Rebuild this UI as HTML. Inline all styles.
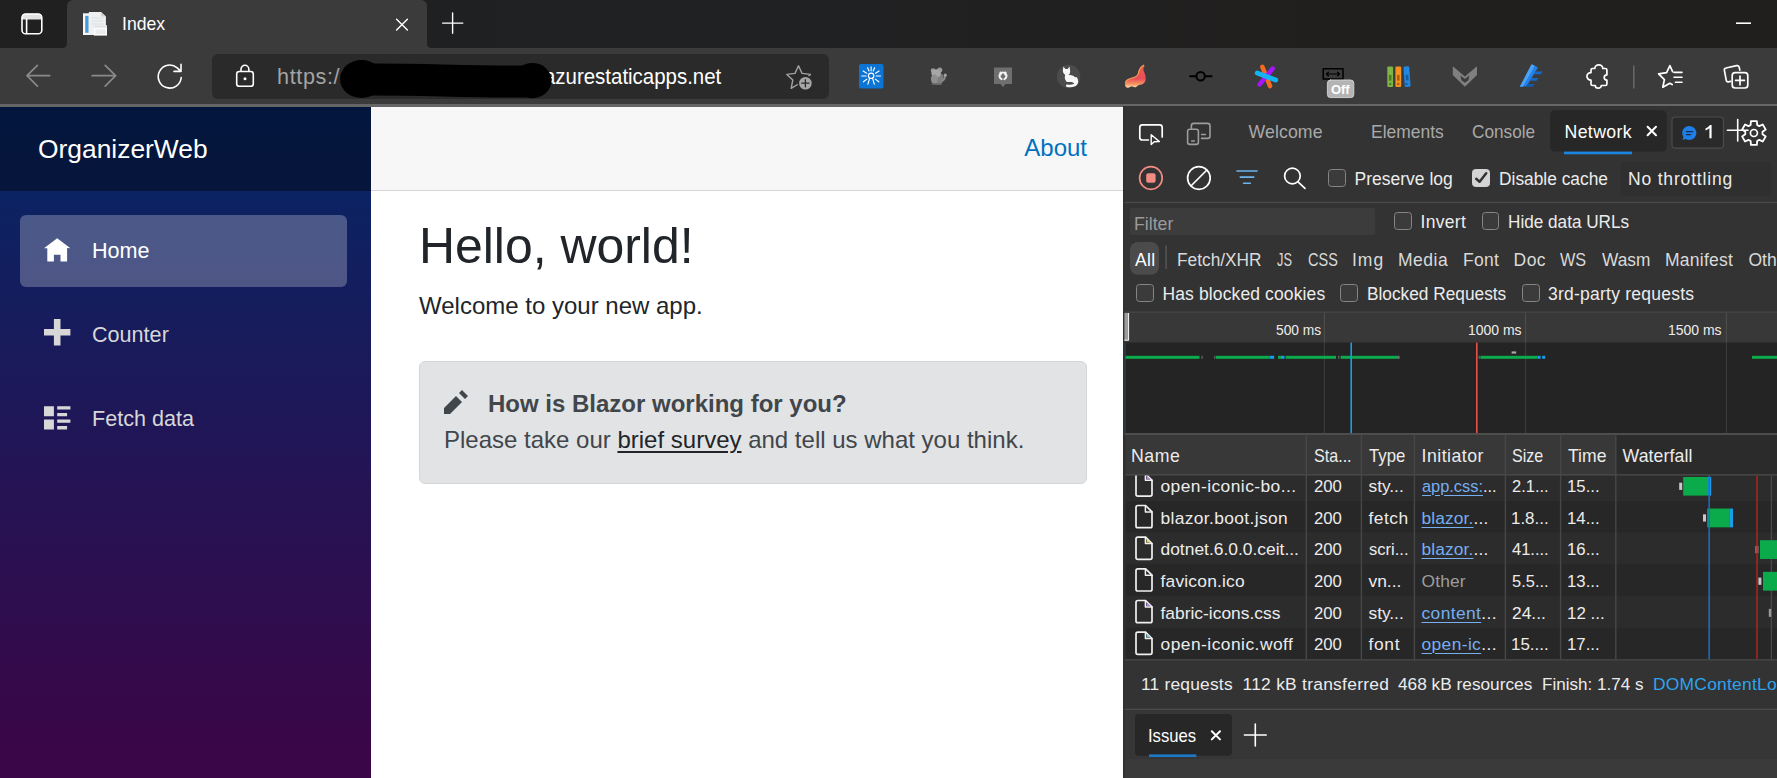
<!DOCTYPE html>
<html>
<head>
<meta charset="utf-8">
<title>Index</title>
<style>
*{box-sizing:border-box;margin:0;padding:0}
html,body{width:1777px;height:778px;overflow:hidden;background:#fff;font-family:"Liberation Sans",sans-serif;}
.abs{position:absolute}
#root{position:relative;width:1777px;height:778px;overflow:hidden}
.t{position:absolute;white-space:nowrap;line-height:1;font-family:"Liberation Sans",sans-serif}
svg{position:absolute;overflow:visible}
/* ---------- browser chrome ---------- */
#tabstrip{left:0;top:0;width:1777px;height:48px;background:linear-gradient(90deg,#202020 0%,#1f2022 25%,#202123 40%,#211f1e 75%,#211f1d 100%)}
#tab{left:67px;top:0;width:360px;height:48px;background:#3b3b3b;border-radius:6px 6px 0 0}
#toolbar{left:0;top:48px;width:1777px;height:57px;background:#3b3b3b}
#tbline{left:0;top:104.4px;width:1777px;height:2.4px;background:#666666}
#urlbar{left:212px;top:54px;width:617px;height:45px;background:#2a2a2a;border-radius:6px}
/* ---------- app ---------- */
#sidebar{left:0;top:106.7px;width:371px;height:672px;background:linear-gradient(180deg,rgb(5,39,103) 0px,#3a0647 640px)}
#brandrow{left:0;top:0;width:371px;height:84px;background:rgba(0,0,0,0.4)}
#brand{left:38px;top:27px;font-size:26.4px;line-height:30px;color:#fff;white-space:nowrap}
.navitem{left:20px;width:327px;height:72px;border-radius:6px}
.navitem.active{background:rgba(255,255,255,0.25)}
.navitem span{position:absolute;left:72px;top:0;line-height:72px;font-size:21.6px;color:#d7d7d7;white-space:nowrap}
.navitem.active span{color:#fff}
.navitem svg{position:absolute;left:24px;top:19.8px;width:26.4px;height:26.4px;fill:#d7d7d7}
.navitem.active svg{fill:#fff}
#main{left:371px;top:106.7px;width:752px;height:672px;background:#fff}
#toprow{left:0;top:0;width:752px;height:84px;background:#f7f7f7;border-bottom:1.5px solid #d6d5d5}
#about{right:36px;top:23.2px;font-size:24px;line-height:36px;color:#0071c1;white-space:nowrap}
#h1{left:48px;top:110.4px;font-size:49.9px;line-height:59.9px;color:#212529;white-space:nowrap;font-weight:500}
#welcome{left:48px;top:181.4px;font-size:24px;line-height:36px;color:#212529;white-space:nowrap}
#alert{left:48px;top:254.3px;width:668px;height:123px;background:#e2e3e5;border:1.5px solid #d3d6d8;border-radius:6px;color:#41464b;font-size:24px;line-height:36px}
#alert .l1{left:68px;top:24px;font-weight:bold;white-space:nowrap}
#alert .l2{left:24px;top:60px;white-space:nowrap}
#alert .l2 u{color:#212529;text-decoration-thickness:2px;text-underline-offset:3px}
#alert svg{position:absolute;left:24px;top:28px;width:24px;height:24px;fill:#41464b}
/* ---------- devtools ---------- */
#dt{left:1123px;top:106px;width:654px;height:672px;background:#333333}
.cb{position:absolute;width:17.8px;height:17.8px;border:1.7px solid #858585;border-radius:3.5px;background:#3b3b3b}
.cb.on{background:#d4d4d4;border-color:#d4d4d4}
</style>
</head>
<body>
<div id="root">
  <!-- browser chrome -->
  <div id="tabstrip" class="abs"></div>
  <div id="tab" class="abs"></div>
  <div id="toolbar" class="abs"></div>
  <div id="tbline" class="abs"></div>
  <div id="urlbar" class="abs"></div>
  <svg id="chromeicons" width="1777" height="106" viewBox="0 0 1777 106" style="left:0;top:0" fill="none" stroke-linecap="round" stroke-linejoin="round">
    <!-- tab curve feet -->
    <path d="M62 48 Q67 48 67 43 L67 48Z" fill="#3b3b3b"/>
    <path d="M432 48 Q427 48 427 43 L427 48Z" fill="#3b3b3b"/>
    <!-- tab actions -->
    <path d="M21.8 19.4 V17.6 Q21.8 13.8 25.6 13.8 H38.2 Q42 13.8 42 17.6 V19.4Z" fill="#e2e2e2" stroke="none"/>
    <rect x="22" y="14" width="19.8" height="19.8" rx="3.6" stroke="#fff" stroke-width="1.6"/>
    <path d="M26.6 19.4 V33.4" stroke="#fff" stroke-width="1.6"/>
    <!-- favicon -->
    <g stroke="none">
      <path d="M83 13.3 H91 V35 H83Z" fill="#f4f6f8"/>
      <rect x="85.2" y="15.8" width="3.4" height="17" fill="#4b9ad4"/>
      <path d="M88.9 12 H101 L105.9 16.6 V35 H88.9Z" fill="#eef0f1"/>
      <path d="M101 12 V16.6 H105.9Z" fill="#cfd3d6"/>
      <rect x="91.5" y="17.5" width="12" height="1" fill="#dcdfe1"/>
      <rect x="91.5" y="20.5" width="12" height="1" fill="#dcdfe1"/>
      <rect x="91.5" y="23.5" width="12" height="1" fill="#dcdfe1"/>
      <rect x="93.8" y="25.4" width="13.2" height="10.2" fill="#fafbfb"/>
      <rect x="93.8" y="25.4" width="13.2" height="2.2" fill="#dfe2e4"/>
      <rect x="95.5" y="29.5" width="10" height="4.5" fill="#e9ebed"/>
    </g>
    <!-- tab close / new tab / minimize -->
    <path d="M396.6 19.3 L407.4 30.1 M407.4 19.3 L396.6 30.1" stroke="#fff" stroke-width="1.4"/>
    <path d="M442.6 23.1 H462.8 M452.6 13 V33.2" stroke="#fff" stroke-width="1.4"/>
    <path d="M1736 23.2 H1751" stroke="#fff" stroke-width="1.6" stroke-linecap="butt"/>
    <!-- back / forward / refresh -->
    <path d="M27 75.7 H49.6 M37.4 65.3 L27 75.7 L37.4 86.1" stroke="#8a8a8a" stroke-width="1.7"/>
    <path d="M92.2 75.7 H115.6 M105.2 65.3 L115.6 75.7 L105.2 86.1" stroke="#8a8a8a" stroke-width="1.7"/>
    <path d="M181.2 77.5 A11.5 11.5 0 1 1 177.2 67.8 L181 71.4 M181 64.4 V71.4 H174" stroke="#fff" stroke-width="1.6"/>
    <!-- lock -->
    <rect x="236.7" y="71.5" width="16.6" height="14.8" rx="2.6" stroke="#fff" stroke-width="1.6"/>
    <path d="M241 71.2 V69.2 A3.9 3.9 0 0 1 248.8 69.2 V71.2" stroke="#fff" stroke-width="1.6"/>
    <circle cx="245" cy="78.8" r="1.5" fill="#fff" stroke="none"/>
    <!-- add favorite star -->
    <path d="M798.5 65.8 L802 73.4 L810.4 74.4 L804.4 80 L805.8 88 L798.5 84 L791.2 88.3 L792.8 80 L786.8 74.4 L795 73.4 Z" stroke="#a2a2a2" stroke-width="1.4"/>
    <circle cx="805.4" cy="83.2" r="7" fill="#a6a6a6" stroke="#2a2a2a" stroke-width="1.4"/>
    <path d="M801.8 83.2 H809 M805.4 79.6 V86.8" stroke="#2a2a2a" stroke-width="1.3"/>
    <!-- ext 1: blue sunburst -->
    <rect x="859" y="64" width="24.5" height="24.5" rx="2" fill="#0b74d5" stroke="none"/>
    <g stroke="#fff" stroke-width="1.15">
      <circle cx="871.1" cy="75.8" r="2.7"/>
      <path d="M869.7 78.2 L867.9 84.2 M872.5 78.2 L874.3 84.2"/>
      <path d="M871.1 70.8 L871.1 66.8 M869.0 71.0 L867.6 67.7 M873.2 71.0 L874.6 67.7 M866.1 76.0 L861.7 76.0 M876.1 76.0 L880.5 76.0 M866.7 73.2 L863.1 71.0 M875.5 73.2 L879.1 71.0 M866.9 79.1 L863.4 81.8 M875.3 79.1 L878.8 81.8"/>
    </g>
    <!-- ext 2: gray mouse -->
    <g stroke="none">
      <ellipse cx="937.6" cy="78.6" rx="6.2" ry="6.2" fill="#7e7e7e"/>
      <circle cx="933" cy="70.6" r="2.3" fill="#9a9a9a"/>
      <circle cx="939.8" cy="70" r="2.5" fill="#9a9a9a"/>
      <ellipse cx="936.2" cy="73.4" rx="4.8" ry="4.2" fill="#a6a6a6"/>
      <ellipse cx="934.4" cy="79" rx="3.4" ry="4.6" fill="#8f8f8f"/>
      <path d="M942.6 80.6 Q945.4 79.4 945 76" stroke="#8a8a8a" stroke-width="1.6" fill="none"/>
      <circle cx="945.2" cy="75.2" r="1.6" fill="#a2a2a2"/>
      <rect x="931.4" y="83.2" width="10.6" height="1.6" rx="0.8" fill="#6c6c6c"/>
    </g>
    <!-- ext 3: gray speech box with octocat ring -->
    <path d="M994 67.6 H1012 V84 H1005.6 L1003 87 L1000.4 84 H994Z" fill="#6f6f6f" stroke="none"/>
    <path d="M1001.6 79.2 A3.5 3.5 0 1 1 1004.4 79.2 M1000.4 72.6 L1000.8 74.4 M1005.6 72.6 L1005.2 74.4" stroke="#f4f4f4" stroke-width="2"/>
    <!-- ext 4: cat in circle -->
    <circle cx="1068.6" cy="76.5" r="11.8" fill="#4b4b4b" stroke="none"/>
    <g fill="#f6f6f6" stroke="none">
      <path d="M1063.4 66.6 L1065.4 69 H1067.6 L1069.6 66.6 L1070.2 71.4 Q1070.2 74 1068.4 75 Q1074.2 74.6 1076.2 79 Q1077.4 82 1075.6 84.4 L1072 82 H1066.8 Q1063.8 78.8 1065.2 75 Q1062.8 73.6 1062.8 70.8Z"/>
    </g>
    <path d="M1076 78.4 Q1078.6 82.8 1074.6 85 Q1071.6 86.4 1067.2 85.8" stroke="#f6f6f6" stroke-width="2.6"/>
    <!-- ext 5: flame -->
    <defs>
      <linearGradient id="flm" x1="0" y1="0" x2="0" y2="1">
        <stop offset="0" stop-color="#ef5f4c"/><stop offset="0.6" stop-color="#e94d5c"/><stop offset="0.82" stop-color="#f5905c"/><stop offset="1" stop-color="#fce0b0"/>
      </linearGradient>
    </defs>
    <path d="M1143.9 64.9 Q1140.6 66.6 1139.6 69 Q1138.6 71.4 1138.4 73.4 Q1137.6 76 1135 77 Q1131.4 78.2 1128 79.4 Q1125.6 80.8 1125.2 83 Q1124.6 85.6 1125.6 86.8 Q1127.2 88.4 1129 87.6 Q1130.8 86.2 1132.6 86.6 Q1134.4 87.8 1136.2 87 Q1138 85 1139.8 84.8 Q1141.8 84.8 1143.4 83.6 Q1145.6 82 1145.7 79.6 Q1145.8 77 1145.2 74.8 Q1144.2 72.4 1143.4 70.2 Q1143 67.8 1144.6 66Z" fill="url(#flm)" stroke="none"/>
    <path d="M1143.6 65.2 Q1140.6 66.8 1139.6 69.2 Q1138.6 71.4 1138.4 73.4 Q1137.6 76 1135 77 Q1131.4 78.2 1128 79.4 Q1125.8 80.6 1125.4 82.6" stroke="#f6a055" stroke-width="1.1" fill="none"/>
    <!-- ext 6: git commit -->
    <path d="M1189.4 76.2 H1196 M1205.2 76.2 H1212.4" stroke="#000" stroke-width="2" stroke-linecap="butt"/>
    <circle cx="1200.6" cy="76.2" r="4.2" stroke="#000" stroke-width="2"/>
    <!-- ext 7: asterisk -->
    <path d="M1262.4 67 L1270 86" stroke="#f26b21" stroke-width="4.6"/>
    <path d="M1272.6 68.6 L1259.6 84.4" stroke="#a317f6" stroke-width="4.6"/>
    <path d="M1257.2 73 L1275.8 80" stroke="#13b4f4" stroke-width="4.8"/>
    <!-- ext 8: window resizer + Off badge -->
    <rect x="1323.2" y="68.7" width="19.8" height="10.2" stroke="#000" stroke-width="1.5"/>
    <path d="M1326.4 74 H1339.6 M1328.4 72.2 L1326.4 74 L1328.4 75.8 M1337.6 72.2 L1339.6 74 L1337.6 75.8" stroke="#000" stroke-width="1.2"/>
    <rect x="1327.4" y="80" width="26.4" height="17.6" rx="3.2" fill="#b4b4b4" stroke="#d6d6d6" stroke-width="0.9"/>
    <!-- ext 9: binders -->
    <g stroke="none">
      <rect x="1387.3" y="66.4" width="5.8" height="20.6" rx="1.2" fill="#7fb446"/>
      <rect x="1395.4" y="66.4" width="5.8" height="20.6" rx="1.2" fill="#f5931f"/>
      <rect x="1403.4" y="66.4" width="5.8" height="20.6" rx="1.2" fill="#2188e1" transform="rotate(-4 1405.6 66.4)"/>
      <rect x="1388.9" y="75" width="2.6" height="5.6" fill="#4f7d25"/>
      <rect x="1397" y="75" width="2.6" height="5.6" fill="#ab600d"/>
      <rect x="1405" y="75" width="2.6" height="5.6" fill="#105ca5" transform="rotate(-4 1405.6 66.4)"/>
      <circle cx="1390.2" cy="84" r="1.2" fill="#4f7d25"/><circle cx="1398.3" cy="84" r="1.2" fill="#ab600d"/><circle cx="1406.5" cy="84" r="1.2" fill="#105ca5"/>
    </g>
    <!-- ext 10: gray V shield -->
    <path d="M1452.8 66.2 L1464.9 76.4 L1477 66.2 V75 L1464.9 86.8 L1452.8 75Z" fill="#808080" stroke="none"/>
    <path d="M1460.4 75.6 L1464.9 79 L1469.4 75.6 L1468.4 80.2 L1464.9 82.8 L1461.4 80.2Z" fill="#3b3b3b" stroke="none"/>
    <!-- ext 11: blue pen / E -->
    <g stroke="none">
      <path d="M1531.6 64.2 L1538 67.4 L1526.6 86.2 L1519.8 86.8 Z" fill="#2382e8"/>
      <path d="M1531.6 64.2 L1534.8 65.8 L1523 86.5 L1519.8 86.8Z" fill="#4aa3f5"/>
      <path d="M1535.4 71.4 H1542.4 L1540.8 74.2 H1533.8Z" fill="#1667c7"/>
      <path d="M1531.2 78 H1538.2 L1536.6 80.8 H1529.6Z" fill="#1667c7"/>
      <path d="M1527.4 84 H1534.4 L1532.8 86.8 H1525.8Z" fill="#1459ad"/>
    </g>
    <!-- puzzle -->
    <path d="M1592.6 68.5 H1594.8 A4 3.7 0 0 1 1602.8 68.5 H1605.3 Q1606.9 68.5 1606.9 70.1 V74.8 A2.7 2.65 0 0 0 1606.9 80.1 V83.9 Q1606.9 85.5 1605.3 85.5 H1601.3 A3 2.7 0 0 1 1595.3 85.5 H1592.6 Q1591 85.5 1591 83.9 V80.1 A4.1 3.75 0 0 1 1591 72.6 V70.1 Q1591 68.5 1592.6 68.5Z" stroke="#fff" stroke-width="1.7"/>
    <!-- separator -->
    <path d="M1633.8 65.4 V88.4" stroke="#6a6a6a" stroke-width="1.5" stroke-linecap="butt"/>
    <!-- favorites -->
    <path d="M1672.6 71.6 L1669.9 65.6 L1666.6 72.6 L1658.6 73.8 L1664.4 79.6 L1662.8 87.2 L1669.8 83.3 L1672.2 84.6" stroke="#fff" stroke-width="1.7"/>
    <path d="M1674 72.4 H1682 M1674 77.3 H1682 M1675.4 82.3 H1682" stroke="#fff" stroke-width="1.6"/>
    <!-- collections -->
    <path d="M1730.6 81.4 L1728.4 81.8 Q1726.6 82 1726.2 80.2 L1724.4 70.4 Q1724 68.4 1726 68 L1736.6 65.6 Q1738.6 65.2 1739.2 67.2 L1739.8 70.2" stroke="#fff" stroke-width="1.7"/>
    <rect x="1732.2" y="72.6" width="15.6" height="15.4" rx="3" stroke="#fff" stroke-width="1.7"/>
    <path d="M1735.6 80.4 H1744.4 M1740 76 V84.8" stroke="#fff" stroke-width="1.7"/>
  </svg>
  <!-- app -->
  <div id="sidebar" class="abs">
    <div id="brandrow" class="abs"><div id="brand" class="abs">OrganizerWeb</div></div>
    <div class="navitem active abs" style="top:108.5px">
      <svg viewBox="0 0 8 8"><path transform="translate(0,1)" d="M4 0l-4 3h1v4h2v-2h2v2h2v-4.03l1 .03-4-3z"/></svg>
      <span>Home</span>
    </div>
    <div class="navitem abs" style="top:192.5px">
      <svg viewBox="0 0 8 8"><path d="M3 0v3h-3v2h3v3h2v-3h3v-2h-3v-3h-2z"/></svg>
      <span>Counter</span>
    </div>
    <div class="navitem abs" style="top:276.5px">
      <svg viewBox="0 0 8 8"><path transform="translate(0,1)" d="M0 0v3h3v-3h-3zm4 0v1h4v-1h-4zm0 2v1h3v-1h-3zm-4 2v3h3v-3h-3zm4 0v1h4v-1h-4zm0 2v1h3v-1h-3z"/></svg>
      <span>Fetch data</span>
    </div>
  </div>
  <div id="main" class="abs">
    <div id="toprow" class="abs"><div id="about" class="abs">About</div></div>
    <div id="h1" class="abs">Hello, world!</div>
    <div id="welcome" class="abs">Welcome to your new app.</div>
    <div id="alert" class="abs">
      <svg viewBox="0 0 8 8"><path d="M6 0l-1 1 2 2 1-1-2-2zm-2 2l-4 4v2h2l4-4-2-2z"/></svg>
      <div class="l1 abs">How is Blazor working for you?</div>
      <div class="l2 abs">Please take our <u>brief survey</u> and tell us what you think.</div>
    </div>
  </div>
  <!-- devtools -->
  <div id="dt" class="abs"></div>
  <svg id="dtsvg" width="1777" height="778" viewBox="0 0 1777 778" style="left:0;top:0" fill="none" stroke-linecap="round" stroke-linejoin="round" shape-rendering="auto">
    <rect x="1123" y="106" width="1.2" height="672" fill="#303030" stroke="none"/>
    <rect x="1550" y="110.2" width="116.7" height="41.4" fill="#272727" rx="5" stroke="none"/>
    <rect x="1564" y="151.6" width="68" height="2.7" fill="#1b86e2" stroke="none"/>
    <rect x="1672" y="117" width="51.5" height="31.2" rx="3.5" fill="#2a2a2a" stroke="#4c4c4c" stroke-width="1.2"/>
    <path d="M1689.4 126 A7 7 0 1 1 1685.6 138.9 L1682.6 140 L1683.4 136.8 A7 7 0 0 1 1689.4 126Z" fill="#1f7fe8" stroke="none"/>
    <path d="M1686.4 131.6 H1692.6 M1686.4 134.6 H1690.6" stroke="#15304f" stroke-width="1.4"/>
    <path d="M1647.6 126.8 L1656 135.2 M1656 126.8 L1647.6 135.2" stroke="#fff" stroke-width="2"/>
    <path d="M1727.4 130.3 H1748 M1737.7 119.6 V141" stroke="#fff" stroke-width="1.6"/>
    <path d="M1750.92 121.07 L1756.88 121.07 L1757.16 124.93 L1759.26 126.14 L1762.75 124.46 L1765.72 129.61 L1762.52 131.79 L1762.52 134.21 L1765.72 136.39 L1762.75 141.54 L1759.26 139.86 L1757.16 141.07 L1756.88 144.93 L1750.92 144.93 L1750.64 141.07 L1748.54 139.86 L1745.05 141.54 L1742.08 136.39 L1745.28 134.21 L1745.28 131.79 L1742.08 129.61 L1745.05 124.46 L1748.54 126.14 L1750.64 124.93Z" stroke="#fff" stroke-width="1.8" stroke-linejoin="round"/>
    <circle cx="1753.9" cy="133" r="3.5" stroke="#fff" stroke-width="1.7"/>
    <path d="M1709.4 138.3 V128.3 Q1707.6 129.7 1705.5 130.4 V128.5 Q1708.4 127.3 1710 125.1 H1711.6 V138.3Z" fill="#fff" stroke="none"/>
    <path d="M1148.4 140 H1142.4 Q1139.8 140 1139.8 137.4 V127.4 Q1139.8 124.8 1142.4 124.8 H1159.6 Q1162.2 124.8 1162.2 127.4 V137" stroke="#fff" stroke-width="1.7"/>
    <path d="M1151.2 134.8 V144.6 L1154.2 141.8 L1159.4 141.6 Z" stroke="#fff" stroke-width="1.4" fill="#333"/>
    <path d="M1191.4 128.2 V125.8 Q1191.4 123.4 1193.8 123.4 H1207.6 Q1210 123.4 1210 125.8 V136 Q1210 138.4 1207.6 138.4 H1201.6" stroke="#9d9d9d" stroke-width="1.6"/>
    <rect x="1187.6" y="129.2" width="10.8" height="15.2" rx="2.2" stroke="#9d9d9d" stroke-width="1.6" fill="#333"/>
    <path d="M1191.6 141 H1194.4 M1201.6 134.6 H1205.4" stroke="#9d9d9d" stroke-width="1.5"/>
    <circle cx="1150.9" cy="178" r="11.3" stroke="#f28b82" stroke-width="1.7"/>
    <rect x="1146.2" y="173.3" width="9.4" height="9.4" fill="#f28b82" rx="2" stroke="none"/>
    <circle cx="1198.9" cy="178" r="11.3" stroke="#fff" stroke-width="1.7"/>
    <path d="M1190.9 186 L1206.9 170" stroke="#fff" stroke-width="1.7"/>
    <path d="M1237 171 H1257 M1240.2 177.1 H1253.8 M1243.6 183.2 H1250.4" stroke="#6cb4ee" stroke-width="1.6"/>
    <circle cx="1292.4" cy="176" r="7.8" stroke="#fff" stroke-width="1.7"/>
    <path d="M1298 181.8 L1305 188.4" stroke="#fff" stroke-width="1.7"/>
    <rect x="1620.6" y="162" width="150.4" height="33.6" fill="#2f2f2f" rx="3" stroke="none"/>
    <rect x="1124.6" y="201.8" width="653" height="1.3" fill="#4b4b4b" stroke="none"/>
    <rect x="1130" y="208" width="245.2" height="27" fill="#3c3c3c" rx="2" stroke="none"/>
    <rect x="1130" y="242" width="29" height="32.8" fill="#4b4b4b" rx="8" stroke="none"/>
    <rect x="1165.4" y="245.5" width="1.4" height="23.5" fill="#585858" stroke="none"/>
    <rect x="1124.6" y="311.6" width="653" height="1.2" fill="#4d4d4d" stroke="none"/>
    <rect x="1124.6" y="312.8" width="653" height="29.8" fill="#383838" stroke="none"/>
    <rect x="1124.6" y="342.6" width="653" height="90.4" fill="#242424" stroke="none"/>
    <rect x="1124.6" y="433" width="653" height="2.2" fill="#4d4d4d" stroke="none"/>
    <rect x="1323.8" y="312.8" width="1.2" height="29.8" fill="#4c4c4c" stroke="none"/>
    <rect x="1323.8" y="342.6" width="1.2" height="90.4" fill="#3a3a3a" stroke="none"/>
    <rect x="1524.9" y="312.8" width="1.2" height="29.8" fill="#4c4c4c" stroke="none"/>
    <rect x="1524.9" y="342.6" width="1.2" height="90.4" fill="#3a3a3a" stroke="none"/>
    <rect x="1725.8" y="312.8" width="1.2" height="29.8" fill="#4c4c4c" stroke="none"/>
    <rect x="1725.8" y="342.6" width="1.2" height="90.4" fill="#3a3a3a" stroke="none"/>
    <rect x="1124.4" y="313" width="4.6" height="27.6" fill="#9c9c9c" stroke="none"/>
    <path d="M1128.6 313 V340.2 H1124.4" stroke="#fff" stroke-width="0.9" stroke-linecap="butt" stroke-linejoin="miter"/>
    <rect x="1123.6" y="342.6" width="2.4" height="90.4" fill="#2b3640" stroke="none"/>
    <rect x="1125.5" y="355.8" width="74" height="3" fill="#0bab4b" stroke="none"/>
    <rect x="1216" y="355.8" width="53.7" height="3" fill="#0bab4b" stroke="none"/>
    <rect x="1269.7" y="355.8" width="4.5" height="3" fill="#1a9ce8" stroke="none"/>
    <rect x="1278" y="355.8" width="3" height="3" fill="#0bab4b" stroke="none"/>
    <rect x="1281" y="355.8" width="3.5" height="3" fill="#1a9ce8" stroke="none"/>
    <rect x="1285.6" y="355.8" width="50.4" height="3" fill="#0bab4b" stroke="none"/>
    <rect x="1340.7" y="355.8" width="56.6" height="3" fill="#0bab4b" stroke="none"/>
    <rect x="1397.3" y="355.8" width="2.2" height="3" fill="#7a7a7a" stroke="none"/>
    <rect x="1480.4" y="355.8" width="57.3" height="3" fill="#0bab4b" stroke="none"/>
    <rect x="1537.7" y="355.8" width="2.9" height="3" fill="#1a9ce8" stroke="none"/>
    <rect x="1542.2" y="355.8" width="3" height="3" fill="#1a9ce8" stroke="none"/>
    <rect x="1752" y="355.8" width="25" height="3" fill="#0bab4b" stroke="none"/>
    <rect x="1201.5" y="355.8" width="1.2" height="3" fill="#6a6a6a" stroke="none"/>
    <rect x="1214.2" y="355.8" width="1.2" height="3" fill="#6a6a6a" stroke="none"/>
    <rect x="1338.2" y="355.8" width="1.2" height="3" fill="#6a6a6a" stroke="none"/>
    <rect x="1478.6" y="355.8" width="1.2" height="3" fill="#6a6a6a" stroke="none"/>
    <rect x="1511.6" y="351.4" width="4.6" height="2.2" fill="#a8a8a8" stroke="none"/>
    <rect x="1350.4" y="342.6" width="1.6" height="90.4" fill="#1a9ce8" stroke="none"/>
    <rect x="1476" y="342.6" width="1.6" height="90.4" fill="#e4524a" stroke="none"/>
    <rect x="1125.6" y="435.2" width="490.2" height="39.4" fill="#383838" stroke="none"/>
    <rect x="1615.8" y="435.2" width="161.2" height="39.4" fill="#2b2b2b" stroke="none"/>
    <rect x="1125.6" y="474.4" width="651.4" height="1.2" fill="#555555" stroke="none"/>
    <rect x="1125.6" y="475.6" width="651.4" height="25.5" fill="#2c2c2c" stroke="none"/>
    <rect x="1125.6" y="501.1" width="651.4" height="31.64" fill="#272727" stroke="none"/>
    <rect x="1125.6" y="532.74" width="651.4" height="31.64" fill="#2c2c2c" stroke="none"/>
    <rect x="1125.6" y="564.38" width="651.4" height="31.64" fill="#272727" stroke="none"/>
    <rect x="1125.6" y="596.02" width="651.4" height="31.64" fill="#2c2c2c" stroke="none"/>
    <rect x="1125.6" y="627.66" width="651.4" height="31.64" fill="#272727" stroke="none"/>
    <rect x="1305.6" y="435.2" width="1.4" height="224.1" fill="#474747" stroke="none"/>
    <rect x="1360.7" y="435.2" width="1.4" height="224.1" fill="#474747" stroke="none"/>
    <rect x="1413.7" y="435.2" width="1.4" height="224.1" fill="#474747" stroke="none"/>
    <rect x="1504.7" y="435.2" width="1.4" height="224.1" fill="#474747" stroke="none"/>
    <rect x="1559.9" y="435.2" width="1.4" height="224.1" fill="#474747" stroke="none"/>
    <rect x="1615.1" y="435.2" width="1.4" height="224.1" fill="#474747" stroke="none"/>
    <rect x="1770.8" y="475.6" width="1.2" height="183.7" fill="#4a4a4a" stroke="none"/>
    <g clip-path="url(#rowclip)"><path d="M1136 475.9 V494.3 Q1136 496.1 1137.8 496.1 H1150.2 Q1152 496.1 1152 494.3 V480.3 L1145.6 473.9 H1137.8 Q1136 473.9 1136 475.9" stroke="#f0f0f0" stroke-width="1.7"/><path d="M1145.4 474.3 V480.3 H1152" stroke="#f0f0f0" stroke-width="1.5"/></g>
    <path d="M1146.6 475.5 L1150.6 479.3 H1146.6Z" fill="#b08ae8" stroke="none" clip-path="url(#rowclip)"/>
    <g><path d="M1136 507.5 V525.9 Q1136 527.7 1137.8 527.7 H1150.2 Q1152 527.7 1152 525.9 V511.9 L1145.6 505.5 H1137.8 Q1136 505.5 1136 507.5" stroke="#f0f0f0" stroke-width="1.7"/><path d="M1145.4 505.9 V511.9 H1152" stroke="#f0f0f0" stroke-width="1.5"/></g>
    <g><path d="M1136 539.2 V557.6 Q1136 559.4 1137.8 559.4 H1150.2 Q1152 559.4 1152 557.6 V543.6 L1145.6 537.2 H1137.8 Q1136 537.2 1136 539.2" stroke="#f0f0f0" stroke-width="1.7"/><path d="M1145.4 537.6 V543.6 H1152" stroke="#f0f0f0" stroke-width="1.5"/></g>
    <path d="M1146.6 538.8 L1150.6 542.6 H1146.6Z" fill="#e8d86a" stroke="none"/>
    <g><path d="M1136 570.8 V589.2 Q1136 591.0 1137.8 591.0 H1150.2 Q1152 591.0 1152 589.2 V575.2 L1145.6 568.8 H1137.8 Q1136 568.8 1136 570.8" stroke="#f0f0f0" stroke-width="1.7"/><path d="M1145.4 569.2 V575.2 H1152" stroke="#f0f0f0" stroke-width="1.5"/></g>
    <g><path d="M1136 602.5 V620.9 Q1136 622.7 1137.8 622.7 H1150.2 Q1152 622.7 1152 620.9 V606.9 L1145.6 600.5 H1137.8 Q1136 600.5 1136 602.5" stroke="#f0f0f0" stroke-width="1.7"/><path d="M1145.4 600.9 V606.9 H1152" stroke="#f0f0f0" stroke-width="1.5"/></g>
    <path d="M1146.6 602.1 L1150.6 605.9 H1146.6Z" fill="#b08ae8" stroke="none"/>
    <g><path d="M1136 634.1 V652.5 Q1136 654.3 1137.8 654.3 H1150.2 Q1152 654.3 1152 652.5 V638.5 L1145.6 632.1 H1137.8 Q1136 632.1 1136 634.1" stroke="#f0f0f0" stroke-width="1.7"/><path d="M1145.4 632.5 V638.5 H1152" stroke="#f0f0f0" stroke-width="1.5"/></g>
    <path d="M1146.6 633.7 L1150.6 637.5 H1146.6Z" fill="#7ec8c8" stroke="none"/>
    <defs><clipPath id="rowclip"><rect x="1125" y="475.6" width="652" height="40"/></clipPath></defs>
    <rect x="1679.2" y="482.7" width="3" height="7.2" fill="#c9c9c9" stroke="none"/>
    <rect x="1683.2" y="477" width="24.8" height="18.6" fill="#0bab4b" stroke="none"/>
    <rect x="1708" y="477" width="3.2" height="18.6" fill="#1a9ce8" stroke="none"/>
    <rect x="1703" y="514.34" width="3" height="7.2" fill="#c9c9c9" stroke="none"/>
    <rect x="1707.2" y="508.54" width="22.7" height="18.8" fill="#0bab4b" stroke="none"/>
    <rect x="1729.9" y="508.54" width="3.1" height="18.8" fill="#1a9ce8" stroke="none"/>
    <rect x="1755.4" y="545.98" width="3" height="7.2" fill="#b98a8a" stroke="none"/>
    <rect x="1760" y="540.18" width="17" height="18.8" fill="#0bab4b" stroke="none"/>
    <rect x="1758.4" y="577.62" width="3" height="7.2" fill="#c9c9c9" stroke="none"/>
    <rect x="1763" y="571.82" width="14" height="18.8" fill="#0bab4b" stroke="none"/>
    <rect x="1768.8" y="608.86" width="2.4" height="8" fill="#9a9a9a" stroke="none"/>
    <rect x="1708.4" y="475.6" width="1.5" height="183.7" fill="#1f6fc6" stroke="none"/>
    <rect x="1756.3" y="475.6" width="1.5" height="183.7" fill="#b3241f" stroke="none"/>
    <rect x="1124.6" y="659.3" width="653" height="1.4" fill="#4b4b4b" stroke="none"/>
    <rect x="1124.6" y="660.7" width="653" height="47.9" fill="#333333" stroke="none"/>
    <rect x="1124.6" y="708.6" width="653" height="1.6" fill="#4b4b4b" stroke="none"/>
    <rect x="1124.6" y="710.2" width="653" height="48.6" fill="#363636" stroke="none"/>
    <rect x="1135" y="714" width="97" height="41.7" fill="#272727" rx="4" stroke="none"/>
    <rect x="1149" y="754.4" width="47.4" height="2.6" fill="#1c78c8" stroke="none"/>
    <path d="M1211.8 731.2 L1220 739.4 M1220 731.2 L1211.8 739.4" stroke="#fff" stroke-width="2"/>
    <path d="M1244.4 735 H1266.2 M1255.3 724 V746" stroke="#fff" stroke-width="1.6"/>
    <rect x="1124.6" y="758.8" width="653" height="19.2" fill="#3a3a3a" stroke="none"/>
  </svg>
  <div class="cb" style="left:1328.2px;top:169.2px"></div>
  <div class="cb on" style="left:1472px;top:169.2px"></div>
  <div class="cb" style="left:1394.3px;top:212px"></div>
  <div class="cb" style="left:1481.5px;top:212px"></div>
  <div class="cb" style="left:1136.2px;top:284.4px"></div>
  <div class="cb" style="left:1340px;top:284.4px"></div>
  <div class="cb" style="left:1521.8px;top:284.4px"></div>
  <svg width="18" height="18" viewBox="0 0 18 18" style="left:1472px;top:169.2px" fill="none"><path d="M4.2 9.8 L7.6 12.8 L14.2 4.2" stroke="#333" stroke-width="2.5" stroke-linecap="round" stroke-linejoin="round"/></svg>
  <!-- text -->
  <div class="t" style="left:122.0px;top:14px;font-size:17.8px;line-height:20px;color:#ffffff;transform:scaleX(0.9909);transform-origin:0 0;">Index</div>
  <div class="t" style="left:277.0px;top:64px;font-size:21.6px;line-height:25px;color:#a4a4a4;letter-spacing:0.63px;">https:/</div>
  <div class="t" style="left:544.0px;top:64px;font-size:21.8px;line-height:25px;color:#ffffff;transform:scaleX(0.9376);transform-origin:0 0;">azurestaticapps.net</div>
  <div class="t" style="left:1331.0px;top:82px;font-size:13.6px;line-height:15px;color:#ffffff;font-weight:bold;transform:scaleX(0.9513);transform-origin:0 0;">Off</div>
  <div class="t" style="left:1248.5px;top:122px;font-size:17.7px;line-height:20px;color:#a9a9a9;letter-spacing:0.10px;">Welcome</div>
  <div class="t" style="left:1370.5px;top:122px;font-size:17.7px;line-height:20px;color:#a9a9a9;transform:scaleX(0.9867);transform-origin:0 0;">Elements</div>
  <div class="t" style="left:1472.0px;top:122px;font-size:17.7px;line-height:20px;color:#a9a9a9;transform:scaleX(0.9719);transform-origin:0 0;">Console</div>
  <div class="t" style="left:1564.5px;top:122px;font-size:17.7px;line-height:20px;color:#ffffff;letter-spacing:0.37px;">Network</div>
  <div class="t" style="left:1354.5px;top:169px;font-size:17.5px;line-height:20px;color:#ececec;">Preserve log</div>
  <div class="t" style="left:1498.5px;top:169px;font-size:17.5px;line-height:20px;color:#ececec;transform:scaleX(0.9909);transform-origin:0 0;">Disable cache</div>
  <div class="t" style="left:1628.0px;top:169px;font-size:17.5px;line-height:20px;color:#ececec;letter-spacing:0.82px;">No throttling</div>
  <div class="t" style="left:1134.0px;top:214px;font-size:17.7px;line-height:20px;color:#9b9b9b;">Filter</div>
  <div class="t" style="left:1420.5px;top:212px;font-size:17.5px;line-height:20px;color:#ececec;letter-spacing:0.32px;">Invert</div>
  <div class="t" style="left:1508.0px;top:212px;font-size:17.5px;line-height:20px;color:#ececec;transform:scaleX(0.9804);transform-origin:0 0;">Hide data URLs</div>
  <div class="t" style="left:1135.0px;top:250px;font-size:17.5px;line-height:20px;color:#ffffff;letter-spacing:0.40px;">All</div>
  <div class="t" style="left:1177.0px;top:250px;font-size:17.5px;line-height:20px;color:#dadada;transform:scaleX(0.9881);transform-origin:0 0;">Fetch/XHR</div>
  <div class="t" style="left:1276.5px;top:250px;font-size:17.5px;line-height:20px;color:#dadada;transform:scaleX(0.7324);transform-origin:0 0;">JS</div>
  <div class="t" style="left:1308.0px;top:250px;font-size:17.5px;line-height:20px;color:#dadada;transform:scaleX(0.8290);transform-origin:0 0;">CSS</div>
  <div class="t" style="left:1352.0px;top:250px;font-size:17.5px;line-height:20px;color:#dadada;letter-spacing:1.00px;">Img</div>
  <div class="t" style="left:1398.0px;top:250px;font-size:17.5px;line-height:20px;color:#dadada;letter-spacing:0.50px;">Media</div>
  <div class="t" style="left:1463.0px;top:250px;font-size:17.5px;line-height:20px;color:#dadada;letter-spacing:0.27px;">Font</div>
  <div class="t" style="left:1513.5px;top:250px;font-size:17.5px;line-height:20px;color:#dadada;letter-spacing:0.50px;">Doc</div>
  <div class="t" style="left:1560.0px;top:250px;font-size:17.5px;line-height:20px;color:#dadada;transform:scaleX(0.9292);transform-origin:0 0;">WS</div>
  <div class="t" style="left:1601.5px;top:250px;font-size:17.5px;line-height:20px;color:#dadada;transform:scaleX(0.9882);transform-origin:0 0;">Wasm</div>
  <div class="t" style="left:1665.0px;top:250px;font-size:17.5px;line-height:20px;color:#dadada;letter-spacing:0.26px;">Manifest</div>
  <div class="t" style="left:1748.5px;top:250px;font-size:17.5px;line-height:20px;color:#dadada;">Other</div>
  <div class="t" style="left:1162.5px;top:284px;font-size:17.5px;line-height:20px;color:#ececec;letter-spacing:0.12px;">Has blocked cookies</div>
  <div class="t" style="left:1367.0px;top:284px;font-size:17.5px;line-height:20px;color:#ececec;transform:scaleX(0.9873);transform-origin:0 0;">Blocked Requests</div>
  <div class="t" style="left:1548.0px;top:284px;font-size:17.5px;line-height:20px;color:#ececec;letter-spacing:0.24px;">3rd-party requests</div>
  <div class="t" style="left:1275.5px;top:322px;font-size:14.4px;line-height:16px;color:#ececec;transform:scaleX(0.9588);transform-origin:0 0;">500 ms</div>
  <div class="t" style="left:1468.0px;top:322px;font-size:14.4px;line-height:16px;color:#ececec;transform:scaleX(0.9712);transform-origin:0 0;">1000 ms</div>
  <div class="t" style="left:1668.0px;top:322px;font-size:14.4px;line-height:16px;color:#ececec;transform:scaleX(0.9712);transform-origin:0 0;">1500 ms</div>
  <div class="t" style="left:1131.0px;top:446px;font-size:17.7px;line-height:20px;color:#ececec;letter-spacing:0.53px;">Name</div>
  <div class="t" style="left:1313.5px;top:446px;font-size:17.7px;line-height:20px;color:#ececec;transform:scaleX(0.9102);transform-origin:0 0;">Sta...</div>
  <div class="t" style="left:1368.5px;top:446px;font-size:17.7px;line-height:20px;color:#ececec;transform:scaleX(0.9491);transform-origin:0 0;">Type</div>
  <div class="t" style="left:1421.5px;top:446px;font-size:17.7px;line-height:20px;color:#ececec;letter-spacing:0.50px;">Initiator</div>
  <div class="t" style="left:1512.0px;top:446px;font-size:17.7px;line-height:20px;color:#ececec;transform:scaleX(0.9063);transform-origin:0 0;">Size</div>
  <div class="t" style="left:1568.0px;top:446px;font-size:17.7px;line-height:20px;color:#ececec;transform:scaleX(0.9950);transform-origin:0 0;">Time</div>
  <div class="t" style="left:1622.5px;top:446px;font-size:17.7px;line-height:20px;color:#ececec;letter-spacing:0.10px;">Waterfall</div>
  <div class="t" style="left:1160.5px;top:476px;font-size:17.4px;line-height:20px;color:#ececec;letter-spacing:0.44px;">open-iconic-bo...</div>
  <div class="t" style="left:1313.5px;top:476px;font-size:17.4px;line-height:20px;color:#ececec;transform:scaleX(0.9591);transform-origin:0 0;">200</div>
  <div class="t" style="left:1368.5px;top:476px;font-size:17.4px;line-height:20px;color:#ececec;letter-spacing:-0.04px;">sty...</div>
  <div class="t" style="left:1421.5px;top:476px;font-size:17.4px;line-height:20px;color:#76aef0;transform:scaleX(0.9411);transform-origin:0 0;"><span style="text-decoration:underline;text-decoration-thickness:1.3px;text-underline-offset:2.5px">app.css:</span><span style="color:#ececec">...</span></div>
  <div class="t" style="left:1512.0px;top:476px;font-size:17.4px;line-height:20px;color:#ececec;transform:scaleX(0.9463);transform-origin:0 0;">2.1...</div>
  <div class="t" style="left:1567.0px;top:476px;font-size:17.4px;line-height:20px;color:#ececec;transform:scaleX(0.9629);transform-origin:0 0;">15...</div>
  <div class="t" style="left:1160.5px;top:508px;font-size:17.4px;line-height:20px;color:#ececec;letter-spacing:0.36px;">blazor.boot.json</div>
  <div class="t" style="left:1313.5px;top:508px;font-size:17.4px;line-height:20px;color:#ececec;transform:scaleX(0.9591);transform-origin:0 0;">200</div>
  <div class="t" style="left:1368.5px;top:508px;font-size:17.4px;line-height:20px;color:#ececec;letter-spacing:0.50px;">fetch</div>
  <div class="t" style="left:1421.5px;top:508px;font-size:17.4px;line-height:20px;color:#76aef0;letter-spacing:0.11px;"><span style="text-decoration:underline;text-decoration-thickness:1.3px;text-underline-offset:2.5px">blazor.</span><span style="color:#ececec">...</span></div>
  <div class="t" style="left:1511.0px;top:508px;font-size:17.4px;line-height:20px;color:#ececec;transform:scaleX(0.9734);transform-origin:0 0;">1.8...</div>
  <div class="t" style="left:1567.0px;top:508px;font-size:17.4px;line-height:20px;color:#ececec;transform:scaleX(0.9629);transform-origin:0 0;">14...</div>
  <div class="t" style="left:1160.5px;top:539px;font-size:17.4px;line-height:20px;color:#ececec;letter-spacing:0.01px;">dotnet.6.0.0.ceit...</div>
  <div class="t" style="left:1313.5px;top:539px;font-size:17.4px;line-height:20px;color:#ececec;transform:scaleX(0.9591);transform-origin:0 0;">200</div>
  <div class="t" style="left:1368.5px;top:539px;font-size:17.4px;line-height:20px;color:#ececec;transform:scaleX(0.9506);transform-origin:0 0;">scri...</div>
  <div class="t" style="left:1421.5px;top:539px;font-size:17.4px;line-height:20px;color:#76aef0;letter-spacing:0.11px;"><span style="text-decoration:underline;text-decoration-thickness:1.3px;text-underline-offset:2.5px">blazor.</span><span style="color:#ececec">...</span></div>
  <div class="t" style="left:1512.0px;top:539px;font-size:17.4px;line-height:20px;color:#ececec;transform:scaleX(0.9477);transform-origin:0 0;">41....</div>
  <div class="t" style="left:1567.0px;top:539px;font-size:17.4px;line-height:20px;color:#ececec;transform:scaleX(0.9629);transform-origin:0 0;">16...</div>
  <div class="t" style="left:1160.5px;top:571px;font-size:17.4px;line-height:20px;color:#ececec;letter-spacing:0.20px;">favicon.ico</div>
  <div class="t" style="left:1313.5px;top:571px;font-size:17.4px;line-height:20px;color:#ececec;transform:scaleX(0.9591);transform-origin:0 0;">200</div>
  <div class="t" style="left:1368.5px;top:571px;font-size:17.4px;line-height:20px;color:#ececec;">vn...</div>
  <div class="t" style="left:1421.5px;top:571px;font-size:17.4px;line-height:20px;color:#9d9d9d;letter-spacing:0.15px;">Other</div>
  <div class="t" style="left:1512.0px;top:571px;font-size:17.4px;line-height:20px;color:#ececec;transform:scaleX(0.9463);transform-origin:0 0;">5.5...</div>
  <div class="t" style="left:1567.0px;top:571px;font-size:17.4px;line-height:20px;color:#ececec;transform:scaleX(0.9629);transform-origin:0 0;">13...</div>
  <div class="t" style="left:1160.5px;top:603px;font-size:17.4px;line-height:20px;color:#ececec;">fabric-icons.css</div>
  <div class="t" style="left:1313.5px;top:603px;font-size:17.4px;line-height:20px;color:#ececec;transform:scaleX(0.9591);transform-origin:0 0;">200</div>
  <div class="t" style="left:1368.5px;top:603px;font-size:17.4px;line-height:20px;color:#ececec;letter-spacing:-0.04px;">sty...</div>
  <div class="t" style="left:1421.5px;top:603px;font-size:17.4px;line-height:20px;color:#76aef0;letter-spacing:0.38px;"><span style="text-decoration:underline;text-decoration-thickness:1.3px;text-underline-offset:2.5px">content</span><span style="color:#ececec">...</span></div>
  <div class="t" style="left:1512.0px;top:603px;font-size:17.4px;line-height:20px;color:#ececec;">24...</div>
  <div class="t" style="left:1567.0px;top:603px;font-size:17.4px;line-height:20px;color:#ececec;transform:scaleX(0.9730);transform-origin:0 0;">12 ...</div>
  <div class="t" style="left:1160.5px;top:634px;font-size:17.4px;line-height:20px;color:#ececec;letter-spacing:0.47px;">open-iconic.woff</div>
  <div class="t" style="left:1313.5px;top:634px;font-size:17.4px;line-height:20px;color:#ececec;transform:scaleX(0.9591);transform-origin:0 0;">200</div>
  <div class="t" style="left:1368.5px;top:634px;font-size:17.4px;line-height:20px;color:#ececec;letter-spacing:0.67px;">font</div>
  <div class="t" style="left:1421.5px;top:634px;font-size:17.4px;line-height:20px;color:#76aef0;letter-spacing:0.38px;"><span style="text-decoration:underline;text-decoration-thickness:1.3px;text-underline-offset:2.5px">open-ic</span><span style="color:#ececec">...</span></div>
  <div class="t" style="left:1511.0px;top:634px;font-size:17.4px;line-height:20px;color:#ececec;transform:scaleX(0.9734);transform-origin:0 0;">15....</div>
  <div class="t" style="left:1567.0px;top:634px;font-size:17.4px;line-height:20px;color:#ececec;transform:scaleX(0.9629);transform-origin:0 0;">17...</div>
  <div class="t" style="left:1141.0px;top:674px;font-size:17.4px;line-height:20px;color:#ececec;letter-spacing:0.20px;">11 requests</div>
  <div class="t" style="left:1242.5px;top:674px;font-size:17.4px;line-height:20px;color:#ececec;letter-spacing:0.27px;">112 kB transferred</div>
  <div class="t" style="left:1398.0px;top:674px;font-size:17.4px;line-height:20px;color:#ececec;transform:scaleX(0.9926);transform-origin:0 0;">468 kB resources</div>
  <div class="t" style="left:1542.0px;top:674px;font-size:17.4px;line-height:20px;color:#ececec;transform:scaleX(0.9808);transform-origin:0 0;">Finish: 1.74 s</div>
  <div class="t" style="left:1653.0px;top:674px;font-size:17.4px;line-height:20px;color:#2ea3ee;letter-spacing:0.25px;">DOMContentLoaded</div>
  <div class="t" style="left:1148.0px;top:726px;font-size:17.7px;line-height:20px;color:#ffffff;transform:scaleX(0.9400);transform-origin:0 0;">Issues</div>
  <svg width="1777" height="106" viewBox="0 0 1777 106" style="left:0;top:0" fill="none" stroke-linecap="round">
    <path d="M358 79.6 C420 78.6 470 82.6 533 81.4" stroke="#000" stroke-width="32"/>
    <ellipse cx="361.5" cy="79" rx="21.5" ry="19" fill="#000"/>
    <ellipse cx="532.5" cy="80.6" rx="19" ry="17.6" fill="#000"/>
  </svg>
</div>
</body>
</html>
